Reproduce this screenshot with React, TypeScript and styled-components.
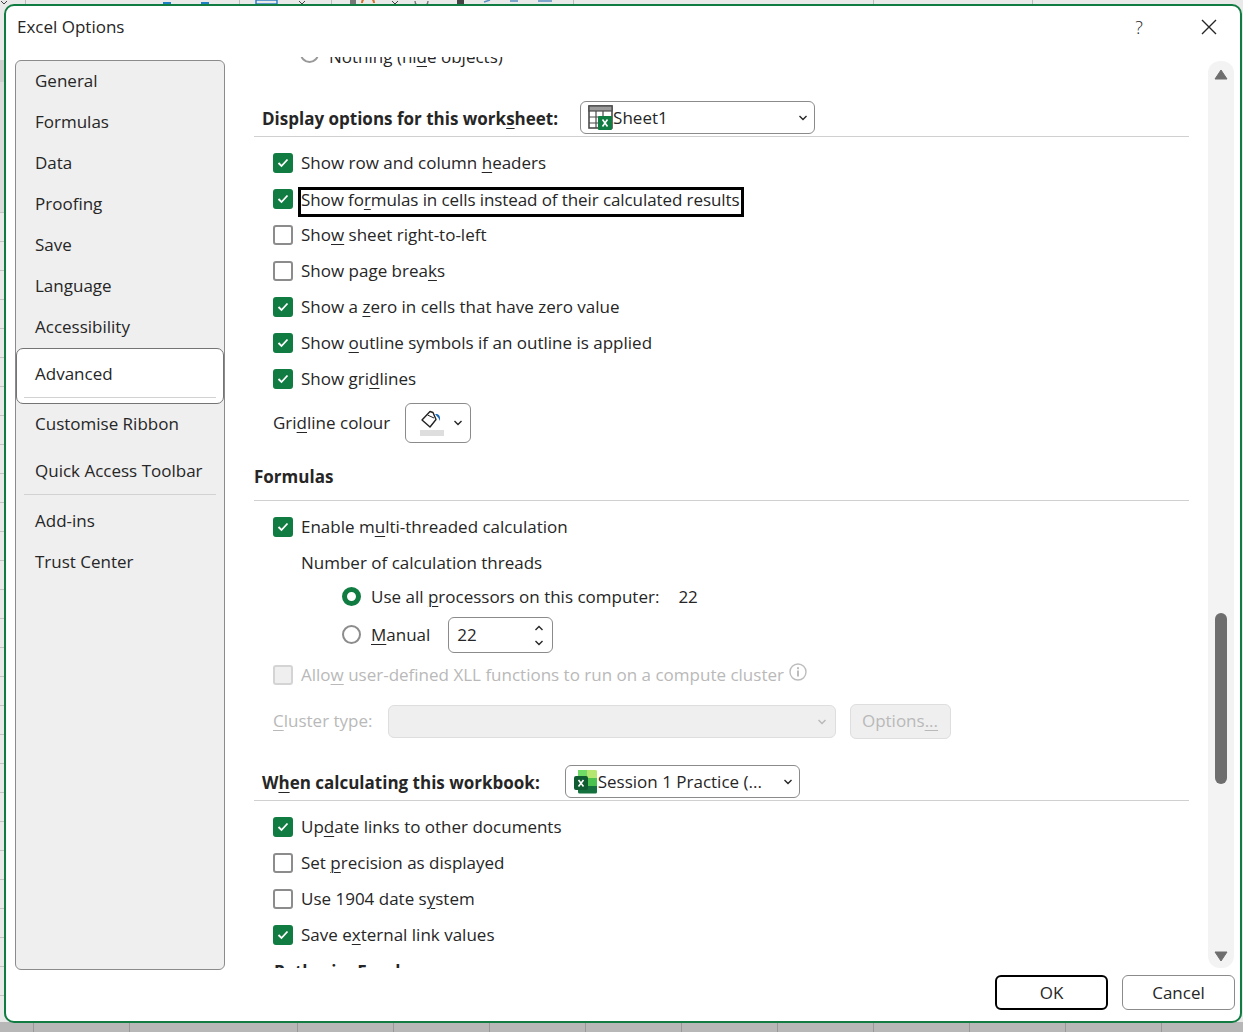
import React from 'react'
import styled, { createGlobalStyle } from 'styled-components'

const GREEN = '#107c41'
const FONT = '"Open Sans", "Noto Sans", "Liberation Sans", sans-serif'

const GlobalStyle = createGlobalStyle`
    html, body {
        margin: 0;
        padding: 0;
        overflow: hidden;
        background: #e9e9e9;
    }
    u {
        text-decoration-thickness: 1px;
        text-underline-offset: 3px;
    }
`

const Page = styled.div`
    position: relative;
    width: 1243px;
    height: 1032px;
    overflow: hidden;
    font-family: ${FONT};
    font-size: 17px;
    color: #262626;
`

const Backdrop = styled.svg`
    position: absolute;
    inset: 0;
`

const Dialog = styled.div`
    position: relative;
    box-sizing: border-box;
    width: 1238px;
    height: 1019px;
    margin: 4px 0 0 4px;
    background: #fff;
    border: 2px solid ${GREEN};
    border-radius: 10px;
    display: flex;
    flex-direction: column;
`

const TitleBar = styled.div`
    height: 54px;
    flex: none;
    display: flex;
    align-items: flex-start;
    padding: 0 19px 0 11px;
`

const Title = styled.div`
    flex: 1;
    line-height: 42px;
    font-size: 17px;
`

const HelpMark = styled.div`
    width: 20px;
    line-height: 42px;
    text-align: center;
    font-size: 18px;
    font-weight: 300;
    margin-right: 48px;
`

const CloseButton = styled.svg`
    width: 24px;
    height: 42px;
`

const Body = styled.div`
    height: 910px;
    flex: none;
    display: flex;
    align-items: flex-start;
    padding-left: 9px;
`

const Sidebar = styled.nav`
    box-sizing: border-box;
    width: 210px;
    height: 910px;
    flex: none;
    background: #efefef;
    border: 1px solid #8b8b8b;
    border-radius: 6px;
    display: flex;
    flex-direction: column;
`

const NavItem = styled.div<{ $offset?: number }>`
    flex: none;
    height: 41px;
    line-height: 40px;
    padding-left: 19px;
    margin-top: ${p => p.$offset || 0}px;
`

const NavActive = styled.div`
    box-sizing: border-box;
    flex: none;
    height: 56px;
    margin: 0;
    padding: 4px 7px 0 18px;
    line-height: 41px;
    background: #fff;
    border: 1px solid #747474;
    border-radius: 7px;
    position: relative;
    &::after {
        content: '';
        position: absolute;
        left: 7px;
        right: 7px;
        bottom: 5px;
        height: 1px;
        background: #d2d2d2;
    }
`

const NavDivider = styled.div`
    flex: none;
    height: 1px;
    margin: 2px 8px 6px;
    background: #d2d2d2;
`

const Viewport = styled.div`
    width: 935px;
    height: 911px;
    flex: none;
    margin: -3px 0 0 29px;
    overflow: hidden;
`

const Content = styled.div`
    margin-top: -18px;
    display: flex;
    flex-direction: column;
`

const Row = styled.div<{ $indent?: number; $disabled?: boolean }>`
    height: 36px;
    flex: none;
    display: flex;
    align-items: center;
    gap: 8px;
    padding-left: ${p => p.$indent ?? 19}px;
    color: ${p => (p.$disabled ? '#b9b9b9' : 'inherit')};
    white-space: nowrap;
`

const RadioRow = styled(Row)<{ $height: number; $gap?: number }>`
    height: ${p => p.$height}px;
    margin-top: ${p => p.$gap || 0}px;
    gap: 10px;
`

const RowGroup = styled.div`
    display: flex;
    flex-direction: column;
    margin-top: 8px;
`

const Label = styled.span`
    margin-top: -2px;
`

const Box = styled.span<{ $checked?: boolean; $disabled?: boolean }>`
    box-sizing: border-box;
    width: 20px;
    height: 20px;
    flex: none;
    border-radius: 3px;
    border: 2px solid ${p => (p.$checked ? GREEN : p.$disabled ? '#d4d4d4' : '#8c8c8c')};
    background: ${p => (p.$checked ? GREEN : p.$disabled ? '#efefef' : '#fff')};
    display: flex;
    align-items: center;
    justify-content: center;
`

const Radio = styled.span<{ $on?: boolean; $faded?: boolean }>`
    box-sizing: border-box;
    width: 19px;
    height: 19px;
    flex: none;
    border-radius: 50%;
    background: #fff;
    border: ${p => (p.$on ? `5px solid ${GREEN}` : `2px solid ${p.$faded ? '#999' : '#8c8c8c'}`)};
    margin-top: ${p => (p.$faded ? -7 : -2)}px;
`

const FocusText = styled.span`
    display: inline-block;
    line-height: 20px;
    padding: 0 2px 4px 0;
    margin-top: 5px;
    letter-spacing: -0.09px;
    outline: 3px solid #000;
`

const SectionHead = styled.div<{ $gap: number }>`
    margin-top: ${p => p.$gap}px;
    height: 33px;
    padding: 0 0 2px 8px;
    border-bottom: 1px solid #d0d0d0;
    display: flex;
    align-items: center;
    font-weight: 700;
    white-space: nowrap;
`

const HeadText = styled.span`
    margin-top: 2px;
`

const PlainHead = styled.div`
    margin-top: 21px;
    line-height: 26px;
    padding-bottom: 10px;
    border-bottom: 1px solid #d0d0d0;
    font-weight: 700;
`

const ClippedHead = styled.div`
    margin-top: 6px;
    padding-left: 20px;
    line-height: 26px;
    font-weight: 700;
    word-spacing: 5px;
`

const Combo = styled.div<{ $left: number }>`
    box-sizing: border-box;
    width: 235px;
    height: 33px;
    margin-left: ${p => p.$left}px;
    padding: 0 6px 0 7px;
    border: 1px solid #8b8b8b;
    border-radius: 6px;
    display: flex;
    align-items: center;
    font-weight: 400;
`

const ComboText = styled.span`
    flex: 1;
`

const ColourRow = styled(Row)`
    height: 40px;
    margin-top: 6px;
    gap: 0;
`

const ColourButton = styled.div`
    box-sizing: border-box;
    width: 66px;
    height: 40px;
    margin-left: 15px;
    padding: 0 7px 0 13px;
    border: 1px solid #8b8b8b;
    border-radius: 6px;
    display: flex;
    align-items: center;
    justify-content: space-between;
`

const TrailingValue = styled.span`
    margin-left: 9px;
    margin-top: -2px;
`

const SpinBox = styled.div`
    box-sizing: border-box;
    width: 105px;
    height: 36px;
    margin-left: 8px;
    padding: 0 8px 0 8px;
    border: 1px solid #8b8b8b;
    border-radius: 6px;
    display: flex;
    align-items: center;
    justify-content: space-between;
`

const SpinArrows = styled.div`
    display: flex;
    flex-direction: column;
    gap: 9px;
`

const DisabledRow = styled(Row)`
    margin-top: 4px;
`

const ClusterRow = styled(Row)`
    height: 35px;
    margin-top: 11px;
    gap: 0;
`

const DisabledCombo = styled.div`
    box-sizing: border-box;
    width: 448px;
    height: 33px;
    margin-left: 15px;
    padding: 0 8px;
    background: #efefef;
    border: 1px solid #dedede;
    border-radius: 6px;
    display: flex;
    align-items: center;
    justify-content: flex-end;
`

const DisabledButton = styled.div`
    box-sizing: border-box;
    width: 101px;
    height: 35px;
    margin-left: 14px;
    background: #efefef;
    border: 1px solid #dedede;
    border-radius: 6px;
    display: flex;
    align-items: center;
    justify-content: center;
`

const Scrollbar = styled.div`
    box-sizing: border-box;
    width: 26px;
    height: 907px;
    flex: none;
    margin: 1px 0 0 19px;
    padding: 8px 7px 6px;
    background: #f3f3f3;
    border-radius: 12px;
    display: flex;
    flex-direction: column;
    align-items: center;
`

const Track = styled.div`
    flex: 1;
    width: 12px;
`

const Thumb = styled.div`
    width: 12px;
    height: 171px;
    margin-top: 533px;
    border-radius: 6px;
    background: #6e6e6e;
`

const Footer = styled.div`
    display: flex;
    justify-content: flex-end;
    gap: 14px;
    padding: 5px 5px 0 0;
`

const ActionButton = styled.button<{ $primary?: boolean }>`
    box-sizing: border-box;
    width: 113px;
    height: 35px;
    padding: 0;
    background: #fff;
    font: inherit;
    color: inherit;
    border: ${p => (p.$primary ? '2px solid #000' : '1px solid #8b8b8b')};
    border-radius: 6px;
`

const Chevron = ({ up, color = '#262626' }: { up?: boolean; color?: string }) => (
    <svg width="10" height="6" viewBox="0 0 10 6" fill="none">
        <path d={up ? 'M1.5 5 L5 1.5 L8.5 5' : 'M1.5 1 L5 4.5 L8.5 1'} stroke={color} strokeWidth="1.4" />
    </svg>
)

const Tick = () => (
    <svg width="12" height="10" viewBox="0 0 12 10" fill="none">
        <path d="M1.5 5 L4.5 8 L10.5 1.5" stroke="#fff" strokeWidth="1.8" />
    </svg>
)

const Check = ({ on, disabled }: { on?: boolean; disabled?: boolean }) => (
    <Box $checked={on} $disabled={disabled}>{on && <Tick />}</Box>
)

const SheetIcon = () => (
    <svg width="25" height="25" viewBox="0 0 25 25" style={{ flex: 'none' }}>
        <rect x="1" y="1" width="23" height="22" fill="#fff" stroke="#4a4a4a" strokeWidth="1.6" />
        <rect x="1" y="1" width="23" height="5" fill="#9c9c9c" stroke="#4a4a4a" strokeWidth="1.2" />
        <path d="M8 6 V23 M1 12 H24 M1 18 H10 M15 6 V11" stroke="#4a4a4a" strokeWidth="1.2" />
        <rect x="10" y="11" width="14" height="14" rx="1" fill={GREEN} />
        <path d="M14.5 14.5 L19.5 21.5 M19.5 14.5 L14.5 21.5" stroke="#fff" strokeWidth="1.6" />
    </svg>
)

const WorkbookIcon = () => (
    <svg width="25" height="25" viewBox="0 0 25 25" style={{ flex: 'none' }}>
        <path d="M5 1 H14 V9 H5 Z" fill="#6fdc65" />
        <path d="M14 1 H23 A1.5 1.5 0 0 1 24 2.5 V9 H14 Z" fill="#b5e66f" />
        <rect x="5" y="9" width="10" height="8" fill="#2f9e44" />
        <rect x="15" y="9" width="9" height="8" fill="#4cc24f" />
        <path d="M5 17 H24 V23 A1.5 1.5 0 0 1 22.5 24.5 H6.5 A1.5 1.5 0 0 1 5 23 Z" fill="#14703c" />
        <rect x="1" y="7" width="14" height="14" rx="2" fill="#0e5c30" />
        <path d="M5.5 11 L10.5 17.5 M10.5 11 L5.5 17.5" stroke="#fff" strokeWidth="1.6" />
    </svg>
)

const BucketIcon = () => (
    <svg width="26" height="28" viewBox="0 0 26 28">
        <path d="M3 11 L11 2.5 L14 3.5 L17 10.5 L11 18 Z" fill="#fff" stroke="#222" strokeWidth="1.4" strokeLinejoin="round" />
        <path d="M8.5 6 L15 9" stroke="#222" strokeWidth="1" />
        <path d="M16 5 C20 4.5 21.5 7 21 12 L19.5 9 Z" fill="#1668b8" />
        <rect x="1" y="21" width="24" height="6" fill="#dedede" />
    </svg>
)

const InfoIcon = () => (
    <svg width="18" height="18" viewBox="0 0 18 18" fill="none" style={{ margin: '-6px 0 0 -3px' }}>
        <circle cx="9" cy="9" r="8" stroke="#bdbdbd" strokeWidth="1.4" />
        <rect x="8" y="7.5" width="2" height="6" fill="#bdbdbd" />
        <rect x="8" y="4.2" width="2" height="2" fill="#bdbdbd" />
    </svg>
)

const Triangle = ({ up }: { up?: boolean }) => (
    <svg width="14" height="11" viewBox="0 0 14 11" style={{ flex: 'none' }}>
        <path d={up ? 'M7 1 L13 10 H1 Z' : 'M1 1 H13 L7 10 Z'} fill="#6e6e6e" stroke="#6e6e6e" strokeLinejoin="round" />
    </svg>
)

// what shows of the sheet behind the dialog
const SheetBehind = () => {
    const bottomLines = [33, 129, 297, 393, 489, 585, 681, 777, 873, 969, 1065, 1161]
    const sideLines = [212, 241, 270, 299, 328, 357, 386, 415, 444, 473, 502, 531, 560, 589, 618, 647, 676, 705, 734, 763, 792, 821, 850, 879, 908, 937, 966, 995]
    return (
        <Backdrop width="1243" height="1032" viewBox="0 0 1243 1032">
            <rect width="1243" height="1032" fill="#e9e9e9" />
            <rect y="60" width="5" height="22" fill="#cfcfcf" />
            <rect y="82" width="5" height="130" fill="#dcdcdc" />
            <rect y="1022" width="1243" height="10" fill="#b7b7b7" />
            {sideLines.map(y => <rect key={y} y={y} width="5" height="1" fill="#c4c4c4" />)}
            {bottomLines.map(x => <rect key={x} x={x} y="1022" width="1" height="10" fill="#999" />)}
            {[25, 239, 331, 573, 873, 1032].map(x => <rect key={x} x={x} width="1" height="5" fill="#bbb" />)}
            <path d="M163 3 L171 3 M209 3 L201 3" stroke="#1f7fc4" strokeWidth="2" />
            <rect x="256" y="0" width="21" height="4" fill="none" stroke="#2a78c0" strokeWidth="1.4" />
            <path d="M299 1 L302 4 L305 1 M392 1 L395 4 L398 1 M1 1 L4 4 L7 1" fill="none" stroke="#444" strokeWidth="1" />
            <path d="M362 3 A6 6 0 0 1 374 3" fill="none" stroke="#d8702a" strokeWidth="2" />
            <rect x="350" y="0" width="6" height="4" fill="#777" />
            <rect x="457" y="0" width="7" height="4" fill="#444" />
            <path d="M415 1 A6 6 0 0 0 428 1" fill="none" stroke="#777" strokeWidth="1.4" />
            <path d="M484 2 L490 0 M510 1 H518 M538 1 H552" stroke="#5a8fc0" strokeWidth="1.5" />
        </Backdrop>
    )
}

const App = () => {
    return (
        <Page>
            <GlobalStyle />
            <SheetBehind />
            <Dialog>
                <TitleBar>
                    <Title>Excel Options</Title>
                    <HelpMark>?</HelpMark>
                    <CloseButton viewBox="0 0 24 42" fill="none">
                        <path d="M5 14 L19 28 M19 14 L5 28" stroke="#262626" strokeWidth="1.4" />
                    </CloseButton>
                </TitleBar>
                <Body>
                    <Sidebar>
                        <NavItem>General</NavItem>
                        <NavItem>Formulas</NavItem>
                        <NavItem>Data</NavItem>
                        <NavItem>Proofing</NavItem>
                        <NavItem>Save</NavItem>
                        <NavItem>Language</NavItem>
                        <NavItem>Accessibility</NavItem>
                        <NavActive>Advanced</NavActive>
                        <NavItem>Customise Ribbon</NavItem>
                        <NavItem $offset={6}>Quick Access Toolbar</NavItem>
                        <NavDivider />
                        <NavItem>Add-ins</NavItem>
                        <NavItem>Trust Center</NavItem>
                    </Sidebar>
                    <Viewport>
                        <Content>
                            <RadioRow $indent={46} $height={36}>
                                <Radio $faded />
                                <Label>Nothing (hi<u>d</u>e objects)</Label>
                            </RadioRow>

                            <SectionHead $gap={26}>
                                <HeadText>Display options for this work<u>s</u>heet:</HeadText>
                                <Combo $left={22}>
                                    <SheetIcon />
                                    <ComboText>Sheet1</ComboText>
                                    <Chevron />
                                </Combo>
                            </SectionHead>
                            <RowGroup>
                                <Row><Check on /><Label>Show row and column <u>h</u>eaders</Label></Row>
                                <Row><Check on /><FocusText>Show fo<u>r</u>mulas in cells instead of their calculated results</FocusText></Row>
                                <Row><Check /><Label>Sho<u>w</u> sheet right-to-left</Label></Row>
                                <Row><Check /><Label>Show page brea<u>k</u>s</Label></Row>
                                <Row><Check on /><Label>Show a <u>z</u>ero in cells that have zero value</Label></Row>
                                <Row><Check on /><Label>Show <u>o</u>utline symbols if an outline is applied</Label></Row>
                                <Row><Check on /><Label>Show gri<u>d</u>lines</Label></Row>
                            </RowGroup>
                            <ColourRow>
                                <Label>Gri<u>d</u>line colour</Label>
                                <ColourButton>
                                    <BucketIcon />
                                    <Chevron />
                                </ColourButton>
                            </ColourRow>

                            <PlainHead>Formulas</PlainHead>
                            <RowGroup>
                                <Row><Check on /><Label>Enable m<u>u</u>lti-threaded calculation</Label></Row>
                                <Row $indent={47}><Label>Number of calculation threads</Label></Row>
                            </RowGroup>
                            <RadioRow $indent={88} $height={32}>
                                <Radio $on />
                                <Label>Use all <u>p</u>rocessors on this computer:</Label>
                                <TrailingValue>22</TrailingValue>
                            </RadioRow>
                            <RadioRow $indent={88} $height={36} $gap={4}>
                                <Radio />
                                <Label><u>M</u>anual</Label>
                                <SpinBox>
                                    <Label>22</Label>
                                    <SpinArrows>
                                        <Chevron up />
                                        <Chevron />
                                    </SpinArrows>
                                </SpinBox>
                            </RadioRow>
                            <DisabledRow $disabled>
                                <Check disabled />
                                <Label>Allo<u>w</u> user-defined XLL functions to run on a compute cluster</Label>
                                <InfoIcon />
                            </DisabledRow>
                            <ClusterRow $disabled>
                                <Label><u>C</u>luster type:</Label>
                                <DisabledCombo><Chevron color="#b9b9b9" /></DisabledCombo>
                                <DisabledButton><Label>Options<u>...</u></Label></DisabledButton>
                            </ClusterRow>

                            <SectionHead $gap={26}>
                                <HeadText>W<u>h</u>en calculating this workbook:</HeadText>
                                <Combo $left={25}>
                                    <WorkbookIcon />
                                    <ComboText>Session 1 Practice (...</ComboText>
                                    <Chevron />
                                </Combo>
                            </SectionHead>
                            <RowGroup>
                                <Row><Check on /><Label>Up<u>d</u>ate links to other documents</Label></Row>
                                <Row><Check /><Label>Set <u>p</u>recision as displayed</Label></Row>
                                <Row><Check /><Label>Use 1904 date s<u>y</u>stem</Label></Row>
                                <Row><Check on /><Label>Save e<u>x</u>ternal link values</Label></Row>
                            </RowGroup>
                            <ClippedHead>Paths in Excel</ClippedHead>
                        </Content>
                    </Viewport>
                    <Scrollbar>
                        <Triangle up />
                        <Track><Thumb /></Track>
                        <Triangle />
                    </Scrollbar>
                </Body>
                <Footer>
                    <ActionButton $primary>OK</ActionButton>
                    <ActionButton>Cancel</ActionButton>
                </Footer>
            </Dialog>
        </Page>
    )
}

export default App
